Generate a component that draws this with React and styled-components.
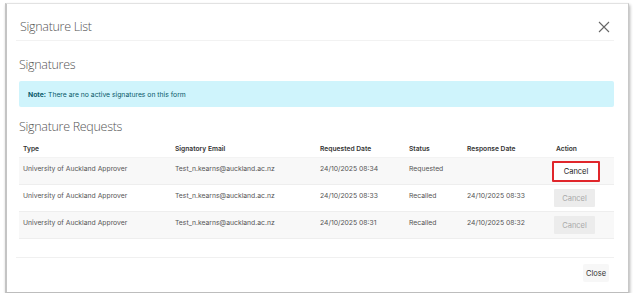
import React from 'react';
import styled, { createGlobalStyle } from 'styled-components';

const GlobalStyle = createGlobalStyle`
    body {
        margin: 0;
        background: #ffffff;
        font-family: Inter, "Liberation Sans", sans-serif;
    }
`

const Frame = styled.div`
    box-sizing: border-box;
    margin: 3px 0 0 5px;
    width: 624px;
    height: 290px;
    border: 1px solid #e2e2e2;
    border-left: 2px solid #c4c4c4;
    border-right: 1px solid #c8c8c8;
    border-bottom: 1px solid #bdbdbd;
    box-shadow: 1px 2px 3px rgba(0, 0, 0, 0.3);
    padding: 9px 0 0 9px;
`

const Modal = styled.div`
    width: 598px;
    display: flex;
    flex-direction: column;
`

const Header = styled.div`
    height: 27px;
    display: flex;
    align-items: center;
    justify-content: space-between;
    padding: 0 4px;
    border-bottom: 1px solid #f2f2f2;
`

const Title = styled.div`
    font-family: "Open Sans", sans-serif;
    font-weight: 300;
    font-size: 12.5px;
    color: #555;
    letter-spacing: -0.3px;
`

const CloseX = styled.svg`
    width: 12px;
    height: 12px;
`

const Body = styled.div`
    padding: 0 0 0 3px;
    display: flex;
    flex-direction: column;
`

const SectionTitle = styled.div`
    font-family: "Open Sans", sans-serif;
    font-weight: 300;
    font-size: 12.5px;
    color: #555;
    letter-spacing: -0.3px;
    margin-top: ${p => p.top}px;
    height: 16px;
    line-height: 16px;
`

const Alert = styled.div`
    margin-top: 8px;
    height: 26px;
    background: #cff4fc;
    border-radius: 2px;
    display: flex;
    align-items: center;
    padding-left: 9px;
    font-size: 6.8px;
    color: #0a5a6a;
    b {
        font-weight: 700;
    }
`

const Table = styled.div`
    margin-top: 6px;
    display: grid;
    grid-template-columns: 152px 145px 89px 58px 89px 62px;
`

const HeadCell = styled.div`
    font-size: 6.7px;
    font-weight: 600;
    color: #333;
    padding: 4px 4px 0;
    height: 17px;
    box-sizing: border-box;
    border-bottom: 1px solid #f3f3f3;
`

const Cell = styled.div`
    font-size: 6.8px;
    color: #555;
    height: 27px;
    box-sizing: border-box;
    padding: 6px 4px 0;
    background: ${p => (p.striped ? '#f8f8f8' : '#ffffff')};
    border-bottom: 1px solid #eeeeee;
`

const ActionCell = styled(Cell)`
    padding: ${p => (p.active ? '3px 0 0 0' : '4px 0 0 2px')};
`

const CancelButton = styled.button`
    font-family: Inter, "Liberation Sans", sans-serif;
    font-size: 7.5px;
    box-sizing: border-box;
    border-radius: 1px;
    cursor: ${p => (p.disabled ? 'default' : 'pointer')};
    width: ${p => (p.disabled ? '41px' : '48px')};
    height: ${p => (p.disabled ? '18px' : '21px')};
    padding: 0;
    color: ${p => (p.disabled ? '#a9a9a9' : '#222')};
    background: ${p => (p.disabled ? '#ececec' : '#ffffff')};
    border: ${p => (p.disabled ? 'none' : '2px solid #e0262b')};
`

const Footer = styled.div`
    margin-top: 18px;
    border-top: 1px solid #f0f0f0;
    display: flex;
    justify-content: flex-end;
    padding: 6px 5px 0 0;
`

const CloseButton = styled.button`
    font-family: Inter, "Liberation Sans", sans-serif;
    font-size: 7.5px;
    color: #333;
    background: #f7f7f7;
    border: none;
    border-radius: 2px;
    width: 26px;
    height: 18px;
    padding: 0;
`

const rows = [
    { type: 'University of Auckland Approver', email: 'Test_n.kearns@auckland.ac.nz', requested: '24/10/2025 08:34', status: 'Requested', response: '', active: true },
    { type: 'University of Auckland Approver', email: 'Test_n.kearns@auckland.ac.nz', requested: '24/10/2025 08:33', status: 'Recalled', response: '24/10/2025 08:33', active: false },
    { type: 'University of Auckland Approver', email: 'Test_n.kearns@auckland.ac.nz', requested: '24/10/2025 08:31', status: 'Recalled', response: '24/10/2025 08:32', active: false },
]

const headers = ['Type', 'Signatory Email', 'Requested Date', 'Status', 'Response Date', 'Action']

export default function App() {
    return (
        <>
            <GlobalStyle />
            <Frame>
                <Modal>
                    <Header>
                        <Title>Signature List</Title>
                        <CloseX viewBox="0 0 12 12">
                            <path d="M1 1 L11 11 M11 1 L1 11" stroke="#666" strokeWidth="1.1" fill="none" />
                        </CloseX>
                    </Header>
                    <Body>
                        <SectionTitle top={16}>Signatures</SectionTitle>
                        <Alert><b>Note:</b>&nbsp;There are no active signatures on this form</Alert>
                        <SectionTitle top={12}>Signature Requests</SectionTitle>
                        <Table>
                            {headers.map(h => <HeadCell key={h}>{h}</HeadCell>)}
                            {rows.map((r, i) => {
                                const striped = i % 2 === 0
                                return (
                                    <React.Fragment key={i}>
                                        <Cell striped={striped}>{r.type}</Cell>
                                        <Cell striped={striped}>{r.email}</Cell>
                                        <Cell striped={striped}>{r.requested}</Cell>
                                        <Cell striped={striped}>{r.status}</Cell>
                                        <Cell striped={striped}>{r.response}</Cell>
                                        <ActionCell striped={striped} active={r.active}>
                                            <CancelButton disabled={!r.active}>Cancel</CancelButton>
                                        </ActionCell>
                                    </React.Fragment>
                                )
                            })}
                        </Table>
                    </Body>
                    <Footer>
                        <CloseButton>Close</CloseButton>
                    </Footer>
                </Modal>
            </Frame>
        </>
    )
}
